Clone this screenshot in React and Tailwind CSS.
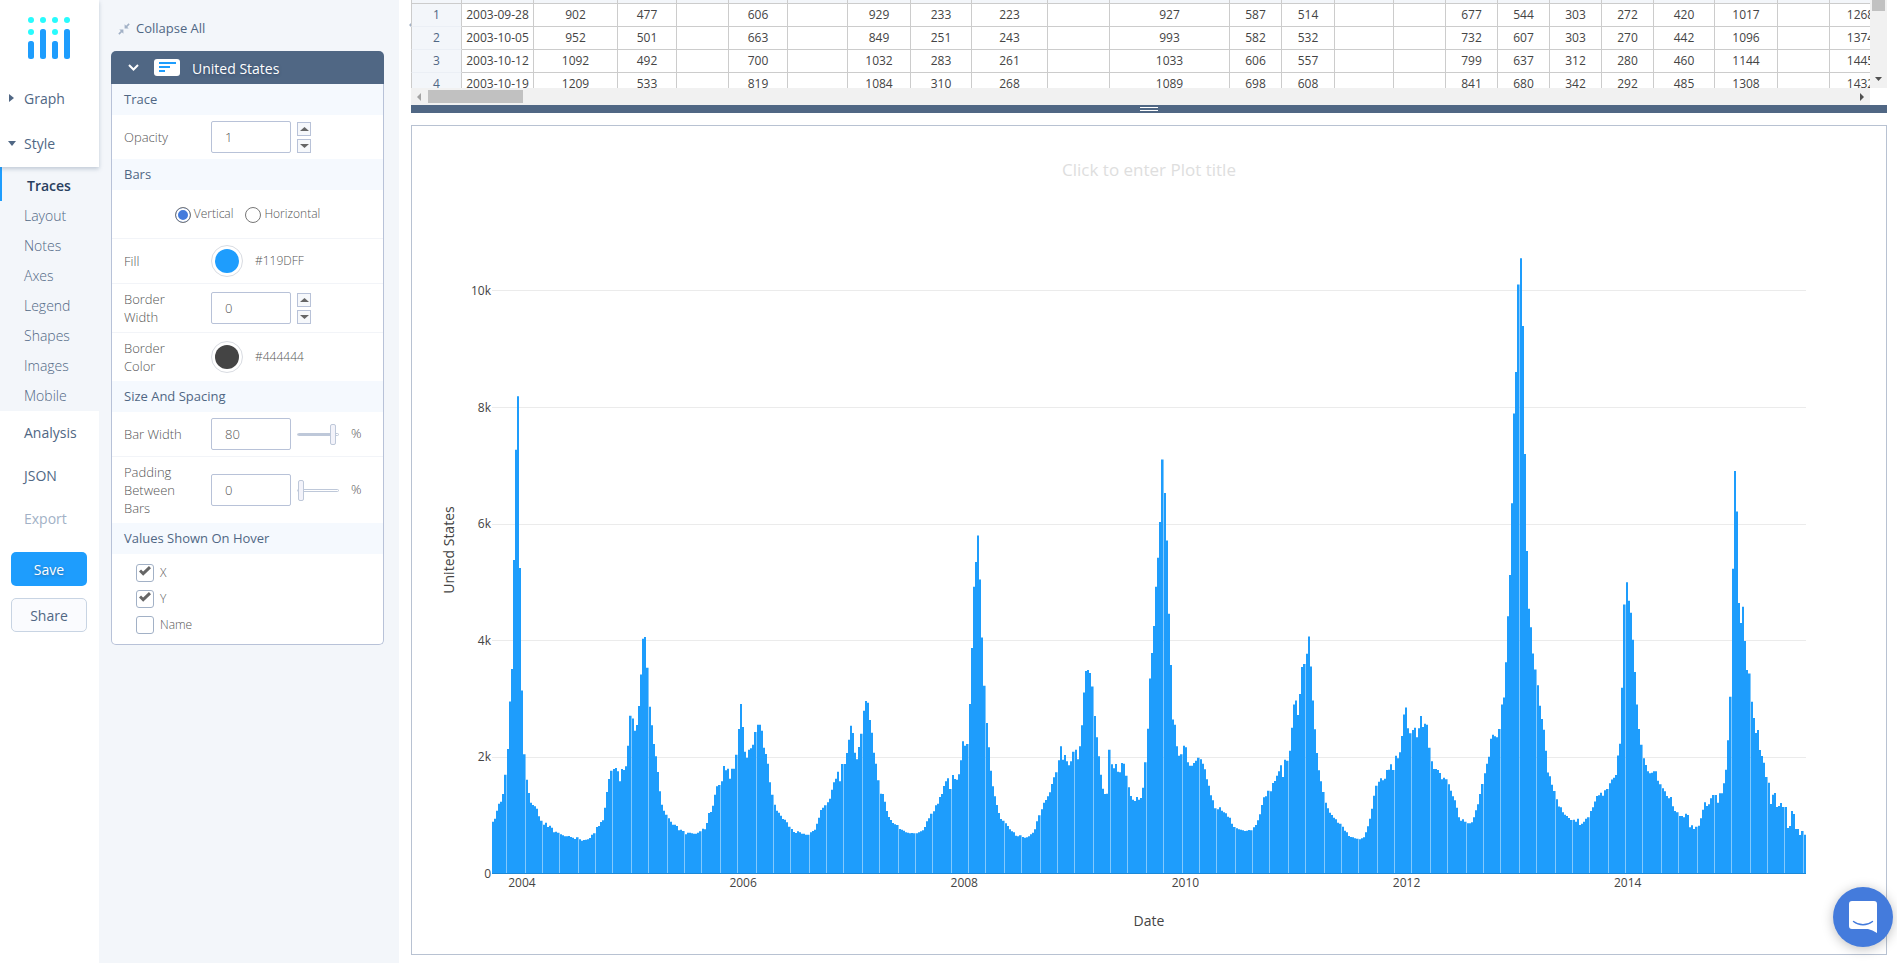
import React from "react";

/* ---------- weekly series, stored as tick offsets below the top of each block ---------- */
const BLOCKS = [
  {
    zero: 1481,
    unit: 5.715,
    tops: [
      1324, 1315, 1291, 1270, 1264, 1241, 1183, 1106, 963, 866, 539, 208, 47, 563, 930, 1122, 1198, 1238, 1267, 1274,
      1278, 1285, 1308, 1321, 1333, 1327, 1340, 1336, 1342, 1356, 1354, 1357, 1362, 1365, 1368, 1368, 1367, 1370, 1372, 1376,
      1371, 1377, 1381, 1379, 1378, 1377, 1373, 1363, 1359, 1340, 1337, 1325, 1320, 1282, 1235, 1196, 1171, 1166, 1163, 1173,
      1203, 1166, 1169, 1158, 1096, 1006, 1014, 1051, 1034, 977, 882, 775, 770, 862, 979, 1035, 1091, 1128, 1175, 1233,
      1273, 1291, 1303, 1314, 1324, 1333, 1333, 1337, 1350, 1348, 1352, 1362, 1357, 1357, 1359, 1360, 1360, 1357, 1353, 1345,
      1347, 1328, 1298, 1295, 1276, 1243, 1218, 1214, 1203, 1157, 1170, 1165, 1195, 1165, 1165, 1123, 1046, 971, 1040, 1114,
      1132, 1108, 1104, 1093, 1055, 1033, 1033, 1051, 1102, 1121, 1150, 1206, 1243, 1273, 1291, 1297, 1306, 1316, 1318, 1326,
      1339, 1346, 1355, 1358, 1353, 1356, 1360, 1360, 1363, 1363, 1356, 1352, 1348, 1330, 1312, 1289, 1282, 1275, 1266, 1255,
      1228, 1206, 1195,
    ],
  },
  {
    zero: 1121,
    unit: 5.715,
    tops: [
      814, 843, 791, 791, 758, 718, 676, 698, 757, 777, 740, 700, 631, 602, 607, 659, 697, 757, 790, 840,
      880, 881, 904, 932, 950, 959, 968, 972, 974, 986, 988, 991, 996, 997, 999, 998, 999, 999, 996, 993,
      990, 980, 963, 954, 940, 933, 915, 910, 890, 881, 857, 843, 834, 866, 824, 836, 838, 822, 780, 723,
      736, 731, 611, 443, 259, 185, 105, 237, 411, 556, 668, 741, 811, 858, 888, 914, 938, 956, 961, 969,
      977, 987, 993, 996, 1006, 1008, 1005, 1010, 1012, 1011, 1008, 1002, 997, 987, 963, 945, 927, 907, 899, 888,
      876, 851, 831, 816, 780, 738, 778, 764, 783, 795, 783, 754, 748, 777, 738, 675, 576, 512, 509, 518,
      558, 647, 711, 768, 823, 865, 881, 880, 748, 792, 804, 791, 814, 816, 788, 790, 826, 861, 887, 898,
      902, 890, 898, 893, 862, 786, 685, 534, 458, 377, 259, 172,
    ],
  },
  {
    zero: 1301,
    unit: 5.715,
    tops: [
      245, 57, 158, 300, 520, 674, 837, 853, 918, 946, 942, 916, 921, 966, 976, 976, 968, 961, 952, 957,
      970, 987, 1017, 1036, 1065, 1080, 1104, 1107, 1101, 1111, 1116, 1119, 1129, 1132, 1150, 1160, 1164, 1167, 1168, 1170,
      1172, 1171, 1169, 1170, 1161, 1154, 1140, 1122, 1094, 1071, 1068, 1051, 1053, 1028, 1022, 1006, 993, 975, 1010, 958,
      961, 931, 862, 792, 780, 824, 761, 680, 671, 640, 588, 678, 780, 867, 938, 990, 1023, 1055, 1087, 1104,
      1117, 1124, 1132, 1137, 1147, 1150, 1159, 1171, 1176, 1187, 1190, 1191, 1194, 1195, 1197, 1194, 1191, 1176, 1158, 1135,
      1105, 1066, 1036, 1024, 1014, 1020, 1015, 989, 988, 972, 989, 946, 954, 936, 887, 822, 801, 864, 879, 869,
      862, 891, 864, 827, 860, 850, 853, 922, 963, 986, 986, 989, 998, 1017, 1012, 1017, 1032, 1051, 1068, 1080,
      1102, 1131, 1141, 1137, 1144, 1149, 1149, 1146, 1131, 1110, 1092,
    ],
  },
  {
    zero: 1528,
    unit: 7.11,
    tops: [
      1335, 1311, 1285, 1262, 1245, 1202, 1192, 1196, 1198, 1178, 1119, 1102, 1017, 906, 807, 634, 417, 317, 106, 43,
      206, 515, 749, 888, 933, 996, 1035, 1073, 1122, 1154, 1180, 1231, 1283, 1292, 1313, 1328, 1348, 1365, 1367, 1379,
      1385, 1388, 1393, 1398, 1397, 1402, 1395, 1410, 1407, 1402, 1395, 1391, 1376, 1367, 1353, 1340, 1338, 1332, 1339, 1326,
      1323, 1309, 1300, 1296, 1289, 1242, 1214, 1079, 878, 824, 869, 898, 963, 1041, 1119, 1178, 1216, 1249, 1265, 1280,
      1285, 1284, 1280, 1280, 1303,
    ],
  },
  {
    zero: 1301,
    unit: 5.715,
    tops: [
      1032, 1044, 1053, 1067, 1074, 1070, 1098, 1112, 1116, 1127, 1127, 1131, 1120, 1124, 1161, 1155, 1166, 1159, 1156, 1134,
      1108, 1086, 1097, 1092, 1074, 1064, 1064, 1087, 1059, 1059, 1029, 988, 900, 769, 385, 92, 213, 488, 548, 499,
      602, 689, 699, 784, 833, 878, 869, 929, 947, 967, 1010, 1027, 1091, 1063, 1058, 1100, 1097, 1088, 1100, 1100,
      1163, 1157, 1112, 1121, 1166, 1166, 1184, 1172, 1183,
    ],
  },
];

const SERIES = BLOCKS.flatMap((b) => b.tops.map((t) => (b.zero - t) * b.unit));
const MAX = 11113;
const SPAN = 1314;
const STEP = SPAN / SERIES.length;
const left = (i) => (i === 0 ? 0 : Math.floor(i * STEP + 0.2));

const SOLID = SERIES.map((v, i) => `M${left(i)} ${MAX}V${MAX - v}h2V${MAX}z`).join("");
const SEAMS = SERIES.map((v, i) =>
  left(i + 1) - left(i) > 2 ? `M${left(i) + 2} ${MAX}V${MAX - v}h1V${MAX}z` : ""
).join("");

const pct = (v) => `${(1 - v / MAX) * 100}%`;

function Chart() {
  return (
    <div className="relative flex min-h-0 flex-1 border border-[#b8c2d2] px-20 pb-20 pt-[100px]">
      <svg className="block min-h-0 w-full flex-1 overflow-visible font-['Open_Sans',sans-serif]" role="img" aria-label="United States by Date">
        {[2000, 4000, 6000, 8000, 10000].map((v) => (
          <line key={v} x1="0" x2="100%" y1={pct(v)} y2={pct(v)} stroke="#ebebeb" strokeWidth="1" shapeRendering="crispEdges" />
        ))}
        <svg width="100%" height="100%" viewBox={`0 0 ${SPAN} ${MAX}`} preserveAspectRatio="none">
          <path d={SOLID} fill="#1e9dfc" />
          <path d={SEAMS} fill="#1e9dfc" fillOpacity="0.55" />
        </svg>
        <g transform="translate(0 -1)">
          <rect x="0" y="100%" width="100%" height="1" fill="#1c89d8" />
        </g>
        {[0, 2, 4, 6, 8, 10].map((k) => (
          <text key={k} x="-1" y={pct(k * 1000)} dy="4" textAnchor="end" fontSize="12" fill="#444">
            {k ? `${k}k` : "0"}
          </text>
        ))}
        {[2004, 2006, 2008, 2010, 2012, 2014].map((year, i) => (
          <text key={year} x={`${2.28 + i * 16.83}%`} y="100%" dy="13" textAnchor="middle" fontSize="12" fill="#444">
            {year}
          </text>
        ))}
        <text x="50%" y="100%" dy="52" textAnchor="middle" fontSize="14" fill="#444">
          Date
        </text>
        <svg x="-38" y="50%" className="overflow-visible">
          <text transform="rotate(-90)" textAnchor="middle" fontSize="14" fill="#444">
            United States
          </text>
        </svg>
        <text x="50%" y="-50" textAnchor="middle" fontSize="17" fill="#dedede">
          Click to enter Plot title
        </text>
      </svg>
    </div>
  );
}

/* ---------- data grid ---------- */
const COLS = [51, 72, 84, 59, 52, 59, 60, 63, 61, 76, 62, 120, 52, 53, 59, 52, 52, 52, 52, 52, 61, 63, 52, 62];
const ROWS = [
  ["2003-09-28", 902, 477, "", 606, "", 929, 233, 223, "", 927, 587, 514, "", "", 677, 544, 303, 272, 420, 1017, "", 1268],
  ["2003-10-05", 952, 501, "", 663, "", 849, 251, 243, "", 993, 582, 532, "", "", 732, 607, 303, 270, 442, 1096, "", 1374],
  ["2003-10-12", 1092, 492, "", 700, "", 1032, 283, 261, "", 1033, 606, 557, "", "", 799, 637, 312, 280, 460, 1144, "", 1445],
  ["2003-10-19", 1209, 533, "", 819, "", 1084, 310, 268, "", 1089, 698, 608, "", "", 841, 680, 342, 292, 485, 1308, "", 1432],
];

function DataGrid() {
  return (
    <div>
      <div className="flex h-[88px]">
        <div className="min-w-0 flex-1 overflow-hidden">
          <table className="w-[1481px] table-fixed border-separate border-spacing-0 text-center text-[12px] leading-[22px] text-[#444]">
            <colgroup>
              {COLS.map((w, i) => (
                <col key={i} style={{ width: w }} />
              ))}
            </colgroup>
            <thead>
              <tr>
                {COLS.map((_, i) => (
                  <th key={i} className="h-1 border-b border-r border-[#ccc] bg-[#f3f6fa] p-0 first:border-l" />
                ))}
              </tr>
            </thead>
            <tbody>
              {ROWS.map((row, r) => (
                <tr key={r}>
                  <th scope="row" className="h-[23px] border-x border-b border-x-[#ccc] border-b-[#ebeff5] bg-[#f3f6fa] p-0 font-normal text-[#506784]">
                    {r + 1}
                  </th>
                  {row.map((cell, c) => (
                    <td key={c} className="h-[23px] border-b border-r border-[#ccc] p-0">
                      {cell}
                    </td>
                  ))}
                </tr>
              ))}
            </tbody>
          </table>
        </div>
        <div className="flex w-[17px] flex-col items-center justify-between bg-[#f1f1f1] pb-[7px]">
          <div className="h-[11px] w-[13px] bg-[#c1c1c1]" />
          <svg width="7" height="4" viewBox="0 0 7 4"><path d="M0 0h7L3.500 4z" fill="#505050" /></svg>
        </div>
      </div>
      <div className="mr-[17px] flex h-[17px] items-center bg-[#f1f1f1] pl-[6px] pr-[6px]">
        <svg width="4" height="8" viewBox="0 0 4 8"><path d="M4 0v8L0 4z" fill="#a3a3a3" /></svg>
        <div className="ml-[7px] h-[13px] w-[95px] bg-[#c1c1c1]" />
        <svg className="ml-auto" width="4" height="8" viewBox="0 0 4 8"><path d="M0 0v8l4-4z" fill="#505050" /></svg>
      </div>
      <div className="flex h-2 flex-col items-center justify-center gap-[2px] bg-[#506784]">
        <div className="h-px w-[18px] bg-white" />
        <div className="h-px w-[18px] bg-white" />
      </div>
    </div>
  );
}

/* ---------- navigation ---------- */
function Logo() {
  const cols = [[31, 2, 24], [43, 1, 12], [55, 2, 24], [67, 1, 12]];
  return (
    <svg width="42" height="42" viewBox="0 0 42 42" aria-label="Plotly" role="img">
      {cols.map(([x, dots, top]) => (
        <g key={x}>
          <circle cx={x - 28} cy="3" r="3" fill="#28fbfd" />
          {dots === 2 && <circle cx={x - 28} cy="15" r="3" fill="#28fbfd" />}
          <rect x={x - 31} y={top} width="6" height={42 - top} rx="2.500" fill="#1e9dfd" />
        </g>
      ))}
    </svg>
  );
}

const SUB = ["Layout", "Notes", "Axes", "Legend", "Shapes", "Images", "Mobile"];

function Sidebar() {
  return (
    <nav className="w-[99px] shrink-0 bg-white text-[14px] text-[#506784]">
      <div className="relative h-[167px] bg-white shadow-[0_2px_4px_rgba(80,103,132,0.3)]">
        <div className="flex h-[76px] items-center pl-7">
          <Logo />
        </div>
        <a href="#graph" className="flex h-11 items-center pl-[9px]">
          <svg width="6" height="8" viewBox="0 0 6 8"><path d="M0 0v8l5-4z" fill="currentColor" /></svg>
          <span className="pl-[9px]">Graph</span>
        </a>
        <a href="#style" className="flex h-[46px] items-center pl-2">
          <svg width="8" height="5" viewBox="0 0 8 5"><path d="M0 0h8L4 5z" fill="currentColor" /></svg>
          <span className="pl-2">Style</span>
        </a>
      </div>
      <div className="bg-[#f3f6fa]">
        <a href="#traces" className="flex h-[34px] items-center border-l-2 border-[#1e9dfd] pl-[25px] pt-[3px] font-semibold text-[#2a3f5f]">
          Traces
        </a>
        <div className="-mt-px pb-px">
          {SUB.map((s) => (
            <a key={s} href={`#${s.toLowerCase()}`} className="flex h-[30px] items-center pl-6 font-light">
              {s}
            </a>
          ))}
        </div>
      </div>
      <div className="flex flex-col">
        <a href="#analysis" className="flex h-[43px] items-center pl-6">Analysis</a>
        <a href="#json" className="flex h-[43px] items-center pl-6">JSON</a>
        <a href="#export" className="flex h-[43px] items-center pl-6 text-[#a2b1c6]">Export</a>
      </div>
      <div className="flex flex-col gap-3 px-[11px] pt-3">
        <button className="h-[34px] w-[76px] rounded-[5px] bg-[#1e9dfd] font-medium text-white [text-shadow:0_1px_3px_rgba(42,63,95,0.5)]">Save</button>
        <button className="h-[34px] w-[76px] rounded-[5px] border border-[#c8d4e3] bg-[#fafbfe] font-medium">Share</button>
      </div>
    </nav>
  );
}

/* ---------- trace settings ---------- */
function Heading({ children }) {
  return <h3 className="flex h-[31px] items-center bg-[#f5f9fe] px-3 text-[13px]">{children}</h3>;
}

function Row({ id, label, tall, line, children }) {
  return (
    <div className={`flex items-center px-3 ${tall} ${line ? "border-t border-[#f2f4f8]" : ""}`}>
      <label htmlFor={id} className="w-[87px] shrink-0 pr-6 text-[13px] font-light leading-[18px] text-[#555]">
        {label}
      </label>
      {children}
    </div>
  );
}

function NumberBox({ id, value }) {
  return (
    <input
      id={id}
      type="text"
      inputMode="numeric"
      defaultValue={value}
      className="h-8 w-20 rounded-[2px] border border-[#b8c2d8] bg-white px-[13px] text-[13px] font-light text-[#555] outline-none"
    />
  );
}

function Stepper({ name }) {
  return (
    <div className="ml-[6px] flex flex-col gap-[3px]">
      <button aria-label={`Increase ${name}`} className="flex size-[14px] items-center justify-center border border-[#b8c2d8] bg-[#f6f8fb]">
        <svg width="9" height="4" viewBox="0 0 9 4"><path d="M0 4h9L4.500 0z" fill="#666" /></svg>
      </button>
      <button aria-label={`Decrease ${name}`} className="flex size-[14px] items-center justify-center border border-[#b8c2d8] bg-[#f6f8fb]">
        <svg width="9" height="4" viewBox="0 0 9 4"><path d="M0 0h9L4.500 4z" fill="#666" /></svg>
      </button>
    </div>
  );
}

function Swatch({ id, color, code }) {
  return (
    <>
      <button id={id} className="flex size-8 items-center justify-center rounded-full border border-[#d9dce2]">
        <span className={`size-6 rounded-full ${color}`} />
      </button>
      <span className="pl-3 text-[12px] font-light text-[#555]">{code}</span>
    </>
  );
}

function Slider({ name, value, fill }) {
  return (
    <>
      <input
        type="range"
        aria-label={name}
        defaultValue={value}
        className={`ml-[6px] h-[21px] w-[42px] appearance-none bg-transparent ${fill} [&::-webkit-slider-runnable-track]:h-[3px] [&::-webkit-slider-runnable-track]:rounded-[2px] [&::-webkit-slider-runnable-track]:border [&::-webkit-slider-runnable-track]:border-[#bec8d9] [&::-webkit-slider-thumb]:-mt-[10px] [&::-webkit-slider-thumb]:h-[21px] [&::-webkit-slider-thumb]:w-[6px] [&::-webkit-slider-thumb]:appearance-none [&::-webkit-slider-thumb]:rounded-[2px] [&::-webkit-slider-thumb]:border [&::-webkit-slider-thumb]:border-[#bec8d9] [&::-webkit-slider-thumb]:bg-[#f3f3fa]`}
      />
      <span className="pl-3 text-[13px] font-light text-[#555]">%</span>
    </>
  );
}

function Radio({ label, checked }) {
  return (
    <label className="flex items-center gap-[3px] text-[12px] font-light text-[#555]">
      <input
        type="radio"
        name="orientation"
        defaultChecked={checked}
        className="size-4 appearance-none rounded-full border border-[#777] bg-white checked:bg-[#447bdc] checked:shadow-[inset_0_0_0_2px_#fff]"
      />
      <span className="pb-[2px]">{label}</span>
    </label>
  );
}

function Check({ label, checked }) {
  return (
    <label className="flex h-[18px] items-center gap-[6px] text-[12px] font-light text-[#555]">
      <span className="relative flex size-[18px]">
        <input type="checkbox" defaultChecked={checked} className="size-[18px] appearance-none rounded-[3px] border border-[#a2b1c6] bg-white" />
        {checked && (
          <svg className="pointer-events-none absolute left-[3px] top-[2px]" width="12" height="10" viewBox="0 0 12 10">
            <path d="M1 4.500l3.200 3.200L11 1.200" fill="none" stroke="#666" strokeWidth="3" />
          </svg>
        )}
      </span>
      {label}
    </label>
  );
}

function TracePanel() {
  return (
    <aside className="w-[300px] shrink-0 bg-[#f3f6fa] px-3 text-[#506784]">
      <button className="flex h-[51px] items-center gap-[6px] pl-[7px] pt-[6px] text-[13px]">
        <svg width="12" height="12" viewBox="0 0 12 12" fill="#a2b1c6">
          <path d="M6.600 5.400V1.300l1.500 1.500L10.600.3l1.100 1.100-2.500 2.500 1.500 1.500zM5.400 6.600v4.100L3.900 9.200 1.400 11.700.3 10.600l2.500-2.500-1.500-1.500z" />
        </svg>
        Collapse All
      </button>
      <section className="w-[273px]">
        <h2 className="flex h-[33px] items-center rounded-t-[5px] bg-[#506784] pl-[17px] text-[14px] font-medium text-white">
          <svg width="11" height="7" viewBox="0 0 11 7"><path d="M1 1l4.500 4.500L10 1" fill="none" stroke="#fff" strokeWidth="2" /></svg>
          <svg className="ml-[15px]" width="26" height="17" viewBox="0 0 26 17">
            <rect width="26" height="17" rx="3" fill="#fff" />
            <path d="M5 3h17v2H5zM5 7h11v2H5zM5 11h6v2H5z" fill="#1e9dfd" />
          </svg>
          <span className="pl-3 pt-px [text-shadow:0_1px_3px_rgba(42,63,95,0.7)]">United States</span>
        </h2>
        <div className="rounded-b-[5px] border border-t-0 border-[#b8c2d8] bg-white">
          <Heading>Trace</Heading>
          <Row id="opacity" label="Opacity" tall="h-11">
            <NumberBox id="opacity" value="1" />
            <Stepper name="opacity" />
          </Row>
          <Heading>Bars</Heading>
          <div className="flex h-12 items-center justify-center gap-3 pt-[2px]">
            <Radio label="Vertical" checked />
            <Radio label="Horizontal" />
          </div>
          <Row id="fill" label="Fill" tall="h-[45px]" line>
            <Swatch id="fill" color="bg-[#1e9dfd]" code="#119DFF" />
          </Row>
          <Row id="border-width" label="Border Width" tall="h-[49px]" line>
            <NumberBox id="border-width" value="0" />
            <Stepper name="border width" />
          </Row>
          <Row id="border-color" label="Border Color" tall="h-[49px]" line>
            <Swatch id="border-color" color="bg-[#444444]" code="#444444" />
          </Row>
          <Heading>Size And Spacing</Heading>
          <Row id="bar-width" label="Bar Width" tall="h-11">
            <NumberBox id="bar-width" value="80" />
            <Slider name="Bar width" value="94" fill="[&::-webkit-slider-runnable-track]:bg-[linear-gradient(90deg,#bec8d9_85%,#fff_85%)]" />
          </Row>
          <Row id="bar-padding" label="Padding Between Bars" tall="h-[67px]" line>
            <NumberBox id="bar-padding" value="0" />
            <Slider name="Padding between bars" value="0" fill="[&::-webkit-slider-runnable-track]:bg-white" />
          </Row>
          <Heading>Values Shown On Hover</Heading>
          <div className="flex h-[90px] flex-col gap-2 pl-6 pt-[10px]">
            <Check label="X" checked />
            <Check label="Y" checked />
            <Check label="Name" />
          </div>
        </div>
      </section>
    </aside>
  );
}

export default function App() {
  return (
    <div className="flex h-screen min-h-[700px] overflow-hidden bg-white font-['Open_Sans',sans-serif]">
      <Sidebar />
      <TracePanel />
      <div className="flex w-3 shrink-0 justify-end pt-[23px]">
        <svg width="2" height="4" viewBox="0 0 2 4"><path d="M2 0v4L0 2z" fill="#a2b1c6" /></svg>
      </div>
      <main className="flex min-w-0 flex-1 flex-col gap-3 pb-2 pr-[10px]">
        <DataGrid />
        <Chart />
      </main>
      <button aria-label="Open chat" className="fixed bottom-4 right-1 flex size-[60px] items-center justify-center rounded-full bg-[#447bdc] shadow-[0_2px_12px_rgba(0,0,0,0.25)]">
        <svg width="28" height="32" viewBox="0 0 28 32">
          <path d="M3 0h22a3 3 0 0 1 3 3v29c-3-2-6-3.300-9-4H3a3 3 0 0 1-3-3V3a3 3 0 0 1 3-3z" fill="#fff" />
          <path d="M4.500 20.500c5.500 4.300 13.500 4.300 19 0" fill="none" stroke="#447bdc" strokeWidth="1.400" strokeLinecap="round" />
        </svg>
      </button>
    </div>
  );
}
